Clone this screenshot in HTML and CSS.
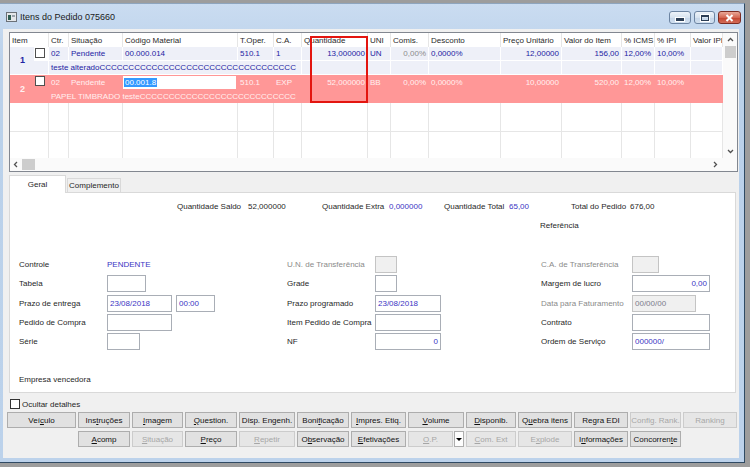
FILE: index.html
```html
<!DOCTYPE html>
<html lang="pt-BR">
<head>
  <meta charset="UTF-8" />
  <title>Itens do Pedido 075660</title>
  <link rel="stylesheet" href="styles.css">
</head>
<body>
  <div class="window">
    <!-- Title bar -->
    <div class="titlebar">
      <svg class="app-icon" width="11" height="10" viewBox="0 0 11 10">
        <rect x="0.5" y="0.5" width="10" height="9" fill="#e4e7ea" stroke="#6b7178"/>
        <rect x="2" y="3" width="3" height="5" fill="#2f5d52"/>
        <rect x="6" y="3" width="3" height="2" fill="#9aa3ad"/>
      </svg>
      <span class="title">Itens do Pedido 075660</span>
      <div class="win-buttons">
        <span class="win-btn min"><span class="glyph-min"></span></span>
        <span class="win-btn max"><span class="glyph-max"></span></span>
        <span class="win-btn close">
          <svg width="9" height="8" viewBox="0 0 9 8"><path d="M1.5 1 L7.5 7 M7.5 1 L1.5 7" stroke="#fff" stroke-width="2"/></svg>
        </span>
      </div>
    </div>

    <div class="client">
      <!-- Items grid -->
      <div class="grid">
        <div class="grid-view">
          <table class="items">
            <colgroup>
              <col class="c-num"><col class="c-chk"><col class="c-ctr"><col class="c-sit">
              <col class="c-cod"><col class="c-top"><col class="c-ca"><col class="c-qtd">
              <col class="c-uni"><col class="c-com"><col class="c-des"><col class="c-pre">
              <col class="c-val"><col class="c-icm"><col class="c-ipi"><col class="c-vipi">
            </colgroup>
            <tr class="head">
              <th colspan="2">Item</th><th>Ctr.</th><th>Situação</th><th>Código Material</th>
              <th>T.Oper.</th><th>C.A.</th><th>Quantidade</th><th>UNI</th><th>Comis.</th>
              <th>Desconto</th><th>Preço Unitário</th><th>Valor do Item</th><th>% ICMS</th>
              <th>% IPI</th><th>Valor IPI</th>
            </tr>
            <tr class="r1">
              <td rowspan="2" class="num">1</td>
              <td class="chk-cell"><span class="chk"></span></td>
              <td>02</td><td>Pendente</td><td>00.000.014</td><td>510.1</td><td>1</td>
              <td class="right">13,000000</td><td>UN</td><td class="right muted">0,00%</td>
              <td>0,0000%</td><td class="right">12,00000</td><td class="right">156,00</td>
              <td>12,00%</td><td>10,00%</td><td></td>
            </tr>
            <tr class="r1 sub">
              <td></td>
              <td colspan="5">teste alteradoCCCCCCCCCCCCCCCCCCCCCCCCCCCCCCCCCC</td>
              <td></td><td></td><td></td><td></td><td></td><td></td><td></td><td></td><td></td>
            </tr>
            <tr class="r2">
              <td rowspan="2" class="num">2</td>
              <td class="chk-cell"><span class="chk"></span></td>
              <td>02</td><td>Pendente</td>
              <td class="edit-cell"><span class="edit"><span class="sel">00.001.8</span></span></td>
              <td>510.1</td><td>EXP</td>
              <td class="right">52,000000</td><td>BB</td><td class="right">0,00%</td>
              <td>0,0000%</td><td class="right">10,00000</td><td class="right">520,00</td>
              <td>12,00%</td><td>10,00%</td><td></td>
            </tr>
            <tr class="r2 sub">
              <td></td>
              <td colspan="5">PAPEL TIMBRADO testeCCCCCCCCCCCCCCCCCCCCCCCCCCC</td>
              <td></td><td></td><td></td><td></td><td></td><td></td><td></td><td></td><td></td>
            </tr>
            <tr class="blank first">
              <td class="num"></td><td></td><td></td><td></td><td></td><td></td><td></td><td></td>
              <td></td><td></td><td></td><td></td><td></td><td></td><td></td><td></td>
            </tr>
            <tr class="blank last">
              <td class="num"></td><td></td><td></td><td></td><td></td><td></td><td></td><td></td>
              <td></td><td></td><td></td><td></td><td></td><td></td><td></td><td></td>
            </tr>
          </table>
          <div class="mark"></div>
        </div>

        <div class="vscroll">
          <span class="arrow"><svg width="7" height="5" viewBox="0 0 7 5"><path d="M1 4 L3.5 1.5 L6 4" fill="none" stroke="#505050" stroke-width="1.3"/></svg></span>
          <span class="thumb"></span>
          <span class="arrow down"><svg width="7" height="5" viewBox="0 0 7 5"><path d="M1 1 L3.5 3.5 L6 1" fill="none" stroke="#505050" stroke-width="1.3"/></svg></span>
        </div>
        <div class="hscroll">
          <span class="arrow"><svg width="5" height="7" viewBox="0 0 5 7"><path d="M4 1 L1.5 3.5 L4 6" fill="none" stroke="#505050" stroke-width="1.3"/></svg></span>
          <span class="thumb"></span>
          <span class="arrow right"><svg width="5" height="7" viewBox="0 0 5 7"><path d="M1 1 L3.5 3.5 L1 6" fill="none" stroke="#505050" stroke-width="1.3"/></svg></span>
        </div>
        <div class="corner"></div>
      </div>

      <!-- Tabs -->
      <div class="tabs">
        <span class="tab active">Geral</span>
        <span class="tab">Complemento</span>
      </div>
      <div class="panel">
        <div class="totals">
          <span>Quantidade Saldo</span><span>52,000000</span>
          <span>Quantidade Extra</span><span class="blue">0,000000</span>
          <span>Quantidade Total</span><span class="blue">65,00</span>
          <span>Total do Pedido</span><span>676,00</span>
        </div>
        <div class="reference">Referência</div>

        <div class="form">
          <span class="lbl">Controle</span>
          <span class="blue">PENDENTE</span>
          <span class="lbl off">U.N. de Transferência</span>
          <span class="field off w22"></span>
          <span class="lbl off">C.A. de Transferência</span>
          <span class="field off w27"></span>

          <span class="lbl">Tabela</span>
          <span class="field w39"></span>
          <span class="lbl">Grade</span>
          <span class="field w22"></span>
          <span class="lbl">Margem de lucro</span>
          <span class="field w78 right">0,00</span>

          <span class="lbl">Prazo de entrega</span>
          <span class="pair">
            <span class="field w65">23/08/2018</span>
            <span class="field w39">00:00</span>
          </span>
          <span class="lbl">Prazo programado</span>
          <span class="field w66">23/08/2018</span>
          <span class="lbl off">Data para Faturamento</span>
          <span class="field off w64">00/00/00</span>

          <span class="lbl">Pedido de Compra</span>
          <span class="field w65"></span>
          <span class="lbl">Item Pedido de Compra</span>
          <span class="field w66"></span>
          <span class="lbl">Contrato</span>
          <span class="field w78"></span>

          <span class="lbl">Série</span>
          <span class="field w33"></span>
          <span class="lbl">NF</span>
          <span class="field w66 right">0</span>
          <span class="lbl">Ordem de Serviço</span>
          <span class="field w78">000000/</span>
        </div>

        <div class="company">Empresa vencedora</div>
      </div>

      <label class="option"><span class="chk"></span>Ocultar detalhes</label>

      <!-- Action buttons -->
      <div class="btns">
        <button class="btn">Veí<u>c</u>ulo</button>
        <button class="btn">Ins<u>t</u>ruções</button>
        <button class="btn"><u>I</u>magem</button>
        <button class="btn"><u>Q</u>uestion.</button>
        <button class="btn">Disp. Engenh.</button>
        <button class="btn">Boni<u>f</u>icação</button>
        <button class="btn"><u>I</u>mpres. Etiq.</button>
        <button class="btn"><u>V</u>olume</button>
        <button class="btn"><u>D</u>isponib.</button>
        <button class="btn">Q<u>u</u>ebra itens</button>
        <button class="btn">Regra EDI</button>
        <button class="btn off">Config. Rank.</button>
        <button class="btn off">Ranking</button>

        <button class="btn skip"><u>A</u>comp</button>
        <button class="btn off"><u>S</u>ituação</button>
        <button class="btn"><u>P</u>reço</button>
        <button class="btn off"><u>R</u>epetir</button>
        <button class="btn">O<u>b</u>servação</button>
        <button class="btn"><u>E</u>fetivações</button>
        <span class="split">
          <button class="btn off"><u>O</u>.P.</button>
          <button class="drop"><span class="tri"></span></button>
        </span>
        <button class="btn off"><u>C</u>om. Ext</button>
        <button class="btn off">E<u>x</u>plode</button>
        <button class="btn">I<u>n</u>formações</button>
        <button class="btn">Concorren<u>t</u>e</button>
      </div>
    </div>
  </div>
</body>
</html>
```

FILE: styles.css
```css
* {
  box-sizing: border-box;
}

body {
  margin: 0;
  background-color: #9d9d9d;
  font-family: "Liberation Sans", Arial, sans-serif;
  font-size: 8px;
  color: #1f1f1f;
  overflow: hidden;
}

/* Window frame */
.window {
  width: 745px;
  height: 460px;
  margin-top: 3px;
  background: linear-gradient(#cadcf1, #bad1ea 60px, #bcd2eb);
  border-top: 1px solid #8ea5be;
  border-right: 1px solid #2f4a63;
  border-bottom: 1px solid #2f4a63;
  display: flex;
  flex-direction: column;
}

.titlebar {
  height: 25px;
  display: flex;
  align-items: center;
  padding: 0 3px 0 6px;
}

.app-icon {
  margin-right: 3px;
}

.title {
  font-size: 9px;
  color: #1b1b1b;
}

.win-buttons {
  margin-left: auto;
  align-self: flex-start;
  margin-top: 7px;
  display: flex;
  gap: 3px;
}

.win-btn {
  height: 13px;
  border: 1px solid #6c84a2;
  border-radius: 3px;
  background: linear-gradient(#eef3f9, #d7e3f0 50%, #c4d5e9 51%, #d2e0ef);
  display: flex;
  align-items: center;
  justify-content: center;
}

.win-btn.min { width: 22px; }
.win-btn.max { width: 21px; }

.win-btn.close {
  width: 23px;
  border-color: #7d2c22;
  background: linear-gradient(#e9a898, #d46753 50%, #c2432f 51%, #d46d58);
}

.glyph-min {
  width: 8px;
  height: 3px;
  margin-top: 4px;
  background: #2c3e55;
  box-shadow: 0 0 0 1px #fff;
}

.glyph-max {
  width: 8px;
  height: 6px;
  border: 1px solid #2c3e55;
  border-top-width: 2px;
  box-shadow: 0 0 0 1px #fff;
}

/* Client area */
.client {
  height: 429px;
  margin: 0 5px 0 3px;
  padding: 3px 1px 0 6px;
  background: #f0f0f0;
}

/* Items grid */
.grid {
  display: grid;
  grid-template-columns: 713px 14px;
  grid-template-rows: 125px 13px;
  width: 729px;
  height: 140px;
  border: 1px solid #828790;
  background: #fff;
}

.grid-view {
  position: relative;
  overflow: hidden;
}

.items {
  width: 713px;
  table-layout: fixed;
  border-collapse: separate;
  border-spacing: 0;
}

.c-num { width: 24px; }
.c-chk { width: 15px; }
.c-ctr { width: 20px; }
.c-sit { width: 54px; }
.c-cod { width: 115px; }
.c-top { width: 36px; }
.c-ca { width: 28px; }
.c-qtd { width: 66px; }
.c-uni { width: 23px; }
.c-com { width: 38px; }
.c-des { width: 72px; }
.c-pre { width: 61px; }
.c-val { width: 60px; }
.c-icm { width: 33px; }
.c-ipi { width: 36px; }
.c-vipi { width: 32px; }

.items th,
.items td {
  height: 14px;
  padding: 0 1px 0 2px;
  line-height: 13px;
  white-space: nowrap;
  overflow: hidden;
  text-align: left;
  font-weight: normal;
  border-right: 1px solid #e6e6e6;
}

.items th {
  color: #2a2a2a;
}

.items .right {
  text-align: right;
  padding-right: 2px;
}

.items .num {
  border-right: none;
  text-align: center;
  font-weight: bold;
  font-size: 9px;
  vertical-align: middle;
}

.chk-cell {
  padding: 0 0 0 1px !important;
  vertical-align: top;
}

.chk {
  display: inline-block;
  width: 10px;
  height: 10px;
  border: 1px solid #4f4f4f;
  background: #fff;
  vertical-align: top;
}

.chk-cell .chk {
  margin-top: 1px;
}

.r1 td {
  background: #eef0f8;
  color: #2323a3;
  border-right-color: #fff;
  border-bottom: 1px solid #fff;
}

.r1 .chk-cell {
  background: #fff;
}

.r1 .muted {
  color: #8c8c8c;
}

.r2 td {
  background: #ff9797;
  color: #fff0f0;
  border-right-color: #ff9797;
}

.edit-cell {
  padding: 0 !important;
  vertical-align: top;
}

.edit {
  display: block;
  width: 113px;
  height: 13px;
  margin-top: 1px;
  padding-left: 1px;
  background: #fff;
  line-height: 13px;
}

.sel {
  background: #3399ff;
  color: #fff;
  padding: 0 1px;
}

.blank.first td {
  height: 29px;
  border-bottom: 1px solid #e6e6e6;
}

.blank.last td {
  height: 26px;
}

.mark {
  position: absolute;
  left: 300px;
  top: 3px;
  width: 58px;
  height: 67px;
  border: 2px solid #e3150f;
}

.vscroll {
  display: flex;
  flex-direction: column;
  align-items: center;
  background: #fafafa;
}

.vscroll .arrow {
  height: 13px;
  display: flex;
  align-items: center;
}

.vscroll .thumb {
  width: 11px;
  height: 12px;
  background: #cdcdcd;
}

.vscroll .down {
  margin-top: auto;
}

.hscroll {
  display: flex;
  align-items: center;
  background: #fafafa;
}

.hscroll .arrow {
  width: 11px;
  height: 13px;
  display: flex;
  align-items: center;
  justify-content: center;
}

.hscroll .thumb {
  width: 13px;
  height: 11px;
  margin-left: 1px;
  background: #cdcdcd;
}

.hscroll .right {
  margin-left: auto;
  margin-right: 2px;
}

.corner {
  background: #fafafa;
}

/* Tabs */
.tabs {
  display: flex;
  align-items: flex-end;
  height: 17px;
  margin-top: 3px;
}

.tab {
  display: flex;
  align-items: center;
  justify-content: center;
  width: 54px;
  height: 14px;
  margin-left: 1px;
  border: 1px solid #d9d9d9;
  border-bottom: none;
  background: #f0f0f0;
}

.tab.active {
  width: 57px;
  height: 18px;
  margin: 0 0 -1px 0;
  background: #fff;
  position: relative;
}

.panel {
  width: 727px;
  height: 201px;
  border: 1px solid #d9d9d9;
  background: #fff;
  padding-top: 9px;
}

.blue {
  color: #3b35c4;
}

.totals {
  display: grid;
  grid-template-columns: 71px 74px 67px 55px 65px 62px 59px 60px;
  margin-left: 167px;
  line-height: 10px;
}

.reference {
  margin-top: 9px;
  padding-left: 530px;
  line-height: 10px;
}

.form {
  display: grid;
  grid-template-columns: 88px 180px 88px 166px 91px 1fr;
  grid-auto-rows: 17px;
  row-gap: 2.25px;
  align-items: center;
  margin-top: 25px;
  padding-left: 9px;
}

.lbl.off {
  color: #8a8a8a;
}

.pair {
  display: flex;
  gap: 4px;
}

.field {
  display: block;
  height: 17px;
  border: 1px solid #a9aeb6;
  background: #fff;
  color: #3b35c4;
  padding: 0 2px;
  line-height: 15px;
}

.field.off {
  background: #f0f0f0;
  border-color: #c4c4c4;
  color: #7c7c8c;
}

.field.right {
  text-align: right;
}

.w22 { width: 22px; }
.w27 { width: 27px; }
.w33 { width: 33px; }
.w39 { width: 39px; }
.w64 { width: 64px; }
.w65 { width: 65px; }
.w66 { width: 66px; }
.w78 { width: 78px; }

.company {
  margin-top: 25px;
  padding-left: 9px;
  line-height: 10px;
}

.option {
  display: flex;
  align-items: center;
  height: 10px;
  margin-top: 6px;
  padding-left: 1px;
}

.option .chk {
  margin-right: 2px;
  border-color: #333;
}

/* Buttons */
.btns {
  display: grid;
  grid-template-columns: 71px 54px 53px 54px 58px 54px 57px 58px 52px 56px 56px 53px 56px;
  grid-auto-rows: 16px;
  row-gap: 3px;
  margin: 3px 0 0 -2px;
}

.btn,
.drop {
  font: inherit;
  padding: 0;
  margin: 0 2px 0 0;
  border: 1px solid #adadad;
  background: #e1e1e1;
  color: #111;
  display: flex;
  align-items: center;
  justify-content: center;
  white-space: nowrap;
}

.btn.off {
  color: #a6a6a6;
  border-color: #cccccc;
  background: #e6e6e6;
}

.btn.skip {
  grid-column-start: 2;
}

.split {
  display: flex;
  gap: 1px;
  margin-right: 2px;
}

.split .btn {
  flex: 1;
  margin: 0;
}

.split .drop {
  width: 10px;
  margin: 0;
  background: #fdfdfd;
}

.tri {
  width: 0;
  height: 0;
  border-left: 3px solid transparent;
  border-right: 3px solid transparent;
  border-top: 3px solid #000;
}
```
